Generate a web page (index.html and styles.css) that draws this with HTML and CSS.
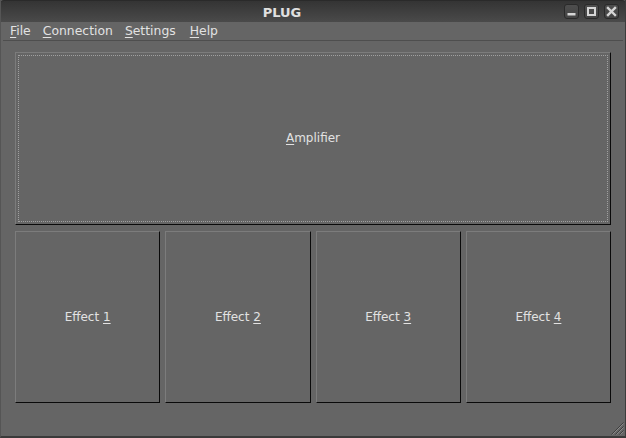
FILE: index.html
```html
<!DOCTYPE html>
<html>
<head>
<meta charset="utf-8">
<link rel="stylesheet" href="styles.css">
</head>
<body>
<div class="window">
  <div class="titlebar">
    <div class="title">PLUG</div>
    <div class="wbtns">
      <div class="wbtn"><svg width="13" height="13" viewBox="0 0 13 13"><rect x="2.5" y="8" width="8" height="2.5" fill="#d6d6d6"/></svg></div>
      <div class="wbtn"><svg width="13" height="13" viewBox="0 0 13 13"><rect x="3" y="3" width="7" height="7" fill="none" stroke="#d6d6d6" stroke-width="2"/></svg></div>
      <div class="wbtn"><svg width="13" height="13" viewBox="0 0 13 13"><path d="M3 3 L10 10 M10 3 L3 10" stroke="#d6d6d6" stroke-width="2.4" stroke-linecap="square"/></svg></div>
    </div>
  </div>
  <div class="menubar">
    <span class="mi"><u>F</u>ile</span>
    <span class="mi"><u>C</u>onnection</span>
    <span class="mi"><u>S</u>ettings</span>
    <span class="mi"><u>H</u>elp</span>
  </div>
  <div class="content">
    <div class="btn amp"><div class="focus"><span><u>A</u>mplifier</span></div></div>
    <div class="effects">
      <div class="btn"><span>Effect <u>1</u></span></div>
      <div class="btn"><span>Effect <u>2</u></span></div>
      <div class="btn"><span>Effect <u>3</u></span></div>
      <div class="btn"><span>Effect <u>4</u></span></div>
    </div>
  </div>
  <svg class="grip" width="16" height="16" viewBox="0 0 16 16">
    <path d="M15.5 3.5 L3.5 15.5 M15.5 7.5 L7.5 15.5 M15.5 11.5 L11.5 15.5" stroke="#3e3e3e" stroke-width="1"/>
    <path d="M15.5 4.5 L4.5 15.5 M15.5 8.5 L8.5 15.5 M15.5 12.5 L12.5 15.5" stroke="#8a8a8a" stroke-width="1"/>
  </svg>
</div>
</body>
</html>
```
FILE: styles.css
```css
html, body {
  margin: 0;
  padding: 0;
  background: #656565;
}
.window {
  position: relative;
  width: 626px;
  height: 438px;
  box-sizing: border-box;
  background: #656565;
  border-left: 1px solid #555;
  border-right: 1px solid #3c3c3c;
  border-bottom: 2px solid #3a3a3a;
  display: flex;
  flex-direction: column;
  font-family: "DejaVu Sans", sans-serif;
  font-size: 12px;
  color: #e2e2e2;
  overflow: hidden;
}
.titlebar {
  height: 22px;
  margin: 0 -1px;
  flex: none;
  background: linear-gradient(#343434, #4a4a4a);
  border-top: 1px solid #2a2a2a;
  border-radius: 4px 4px 0 0;
  box-sizing: border-box;
  display: flex;
  align-items: center;
  position: relative;
}
.title {
  width: 564px;
  text-align: center;
  font-weight: bold;
  font-size: 13px;
  color: #e0e0e0;
  padding-top: 1px;
}
.wbtns {
  display: flex;
  gap: 5px;
}
.wbtn {
  width: 15px;
  height: 15px;
  box-sizing: border-box;
  border: 1px solid #2a2a2a;
  border-radius: 3px;
  background: linear-gradient(#4e4e4e, #444);
  display: flex;
  align-items: center;
  justify-content: center;
}
.menubar {
  height: 18px;
  flex: none;
  margin: 0 2px;
  padding-left: 1px;
  border-bottom: 1px solid #4e4e4e;
  display: flex;
  align-items: center;
  font-size: 12.4px;
}
.mi {
  padding: 0 6px;
  line-height: 18px;
}
.mi:last-child {
  margin-left: 2px;
}
u {
  text-decoration: underline;
  text-underline-offset: 2px;
  text-decoration-thickness: 1px;
}
.content {
  flex: 1;
  display: grid;
  grid-template-rows: 1fr 1fr;
  gap: 6px;
  padding: 11px 14px 33px 14px;
  min-height: 0;
}
.btn {
  box-sizing: border-box;
  min-height: 0;
  border-top: 1px solid #7c7c7c;
  border-left: 1px solid #7c7c7c;
  border-right: 1px solid #0a0a0a;
  border-bottom: 1px solid #0a0a0a;
  background: #656565;
  display: flex;
  align-items: center;
  justify-content: center;
}
.amp {
  padding: 2px;
}
.focus {
  flex: 1;
  align-self: stretch;
  border: 1px dotted #a0a0a0;
  display: flex;
  align-items: center;
  justify-content: center;
}
.effects {
  display: grid;
  grid-template-columns: repeat(4, 1fr);
  gap: 5px;
  min-height: 0;
}
.grip {
  position: absolute;
  right: 1px;
  bottom: 1px;
}
```
